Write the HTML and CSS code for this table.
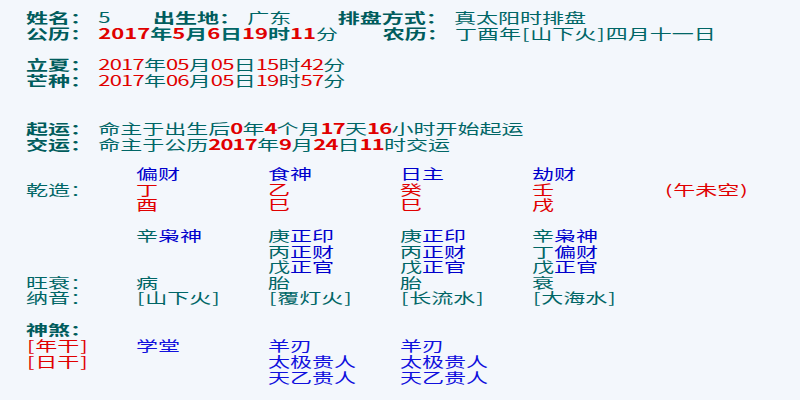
FILE: index.html
```html
<!DOCTYPE html>
<html lang="zh-CN">
<head>
<meta charset="utf-8">
<title>排盘</title>
<link rel="stylesheet" href="styles.css">
</head>
<body>
<div class="page">
  <div class="blk blk-a">
    <div class="row">
      <span class="seg seg-1"><b class="lbl">姓名：</b><span>5</span></span>
      <span class="seg seg-2"><b class="lbl">出生地：</b><span>广东</span></span>
      <span class="seg"><b class="lbl">排盘方式：</b><span>真太阳时排盘</span></span>
    </div>
    <div class="row">
      <span class="seg seg-w"><b class="lbl">公历：</b><b><span class="num">2017</span>年<span class="num">5</span>月<span class="num">6</span>日<span class="num">19</span>时<span class="num">11</span></b>分</span>
      <span class="seg"><b class="lbl">农历：</b><span>丁酉年<span class="br">[</span>山下火<span class="br">]</span>四月十一日</span></span>
    </div>
  </div>

  <div class="blk blk-b">
    <div class="row"><b class="lbl">立夏：</b><span class="red d">2017</span>年<span class="red d">05</span>月<span class="red d">05</span>日<span class="red d">15</span>时<span class="red d">42</span>分</div>
    <div class="row"><b class="lbl">芒种：</b><span class="red d">2017</span>年<span class="red d">06</span>月<span class="red d">05</span>日<span class="red d">19</span>时<span class="red d">57</span>分</div>
  </div>

  <div class="blk blk-c">
    <div class="row"><b class="lbl">起运：</b>命主于出生后<b class="red d">0</b>年<b class="red d">4</b>个月<b class="red d">17</b>天<b class="red d">16</b>小时开始起运</div>
    <div class="row"><b class="lbl">交运：</b>命主于公历<b class="red d">2017</b>年<b class="red d">9</b>月<b class="red d">24</b>日<b class="red d">11</b>时交运</div>
  </div>

  <div class="blk blk-d">
    <div class="prow"><span></span><span class="blue">偏财</span><span class="blue">食神</span><span class="blue">日主</span><span class="blue">劫财</span><span></span></div>
    <div class="prow"><span class="plbl">乾造：</span><span class="red">丁</span><span class="red">乙</span><span class="red">癸</span><span class="red">壬</span><span class="red"><span class="br">(</span>午未空<span class="br">)</span></span></div>
    <div class="prow"><span></span><span class="red">酉</span><span class="red">巳</span><span class="red">巳</span><span class="red">戌</span><span></span></div>
    <div class="prow blank"></div>
    <div class="prow"><span></span><span>辛<span class="blue">枭神</span></span><span>庚<span class="blue">正印</span></span><span>庚<span class="blue">正印</span></span><span>辛<span class="blue">枭神</span></span><span></span></div>
    <div class="prow"><span></span><span></span><span>丙<span class="blue">正财</span></span><span>丙<span class="blue">正财</span></span><span>丁<span class="blue">偏财</span></span><span></span></div>
    <div class="prow"><span></span><span></span><span>戊<span class="blue">正官</span></span><span>戊<span class="blue">正官</span></span><span>戊<span class="blue">正官</span></span><span></span></div>
    <div class="prow"><span class="plbl">旺衰：</span><span>病</span><span>胎</span><span>胎</span><span>衰</span><span></span></div>
    <div class="prow"><span class="plbl">纳音：</span><span><span class="br">[</span>山下火<span class="br">]</span></span><span><span class="br">[</span>覆灯火<span class="br">]</span></span><span><span class="br">[</span>长流水<span class="br">]</span></span><span><span class="br">[</span>大海水<span class="br">]</span></span><span></span></div>
  </div>

  <div class="blk blk-e">
    <div class="prow"><b class="plbl">神煞：</b><span></span><span></span><span></span><span></span><span></span></div>
    <div class="prow"><span class="red"><span class="br">[</span>年干<span class="br">]</span></span><span class="sha">学堂</span><span class="sha">羊刃</span><span class="sha">羊刃</span><span></span><span></span></div>
    <div class="prow"><span class="red"><span class="br">[</span>日干<span class="br">]</span></span><span></span><span class="sha">太极贵人</span><span class="sha">太极贵人</span><span></span><span></span></div>
    <div class="prow"><span></span><span></span><span class="sha">天乙贵人</span><span class="sha">天乙贵人</span><span></span><span></span></div>
  </div>
</div>
</body>
</html>
```

FILE: styles.css
```css
html, body {
  margin: 0;
  padding: 0;
  overflow: hidden;
  background: #f3f7fc;
}

.page {
  width: 493px;
  padding: 9px 0 0 16.5px;
  transform: scale(1.5714, 1);
  transform-origin: 0 0;
  font-family: "Noto Sans CJK SC", "Noto Sans", sans-serif;
  font-size: 14px;
  line-height: 16px;
  color: #006666;
  white-space: nowrap;
}

b { font-weight: 700; }

.row {
  display: flex;
  height: 16px;
}

.seg { display: flex; }
.seg-1 { width: 80.8px; }
.seg-2 { width: 117.7px; }
.seg-w { width: 227px; }

/* labels use centred full-width colons */
.lbl {
  margin-right: 4px;
  color: #005c5c;
  font-family: "Noto Sans CJK JP", "Noto Sans CJK SC", sans-serif;
}
.plbl {
  font-family: "Noto Sans CJK JP", "Noto Sans CJK SC", sans-serif;
}
b.plbl { color: #005c5c; }

.br {
  display: inline-block;
  width: 6px;
  text-align: center;
}

.num { color: #e00000; }
.red { color: #e00000; }
.d { letter-spacing: -0.5px; }
.blue { color: #0000cc; }
.sha { color: #1010dd; }

.blk-b { margin-top: 15px; }
.blk-c { margin-top: 32px; }
.blk-d { margin-top: 14px; line-height: 15.5px; }
.blk-e { margin-top: 15.5px; }

.prow {
  display: grid;
  grid-template-columns: 70px 84px 84px 84px 84px auto;
  height: 15.5px;
}
.blk-e .prow { height: 16px; line-height: 16px; }
.prow.blank { height: 15.5px; }
```
